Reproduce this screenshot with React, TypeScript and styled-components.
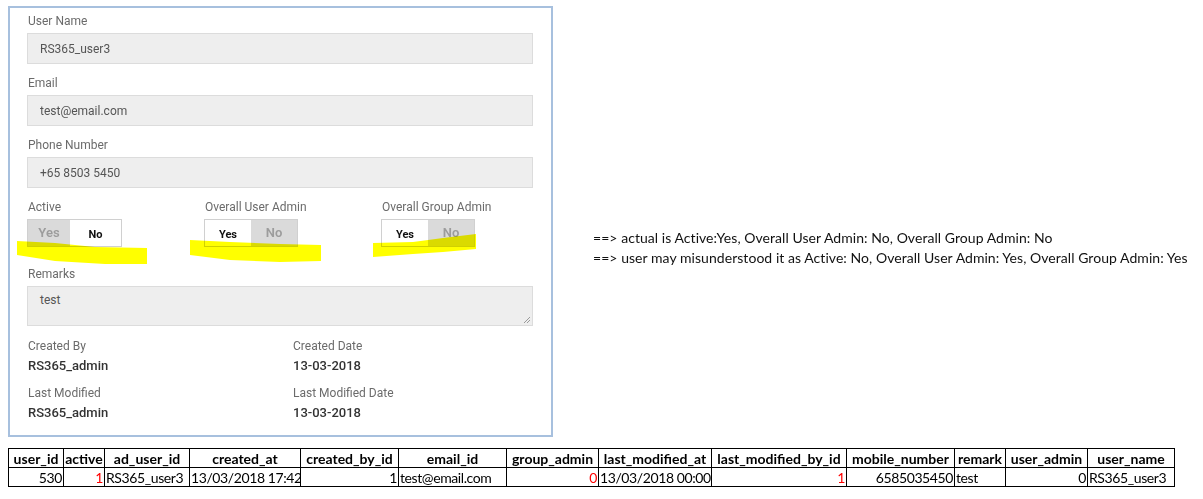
import React from "react";
import styled, { createGlobalStyle } from "styled-components";

const Global = createGlobalStyle`
  html, body { margin: 0; padding: 0; background: #ffffff; }
  body { width: 1203px; height: 499px; overflow: hidden; }
`;

const Page = styled.div`
  display: flex;
  flex-direction: column;
  padding: 6px 0 0 8px;
`;

const Top = styled.div`
  display: flex;
  align-items: flex-start;
`;

const Card = styled.div`
  box-sizing: border-box;
  width: 545px;
  height: 431px;
  border: 2px solid #a7c0de;
  padding: 6px 18px 0 17px;
  font-family: Roboto, "Noto Sans", sans-serif;
`;

const Field = styled.div<{ $mb?: number }>`
  display: flex;
  flex-direction: column;
  margin-bottom: ${(p) => (p.$mb ?? 12)}px;
`;

const Label = styled.div`
  font-size: 12px;
  line-height: 14px;
  color: #6b6b6b;
  margin-bottom: 5px;
  padding-left: 1px;
`;

const Input = styled.div`
  box-sizing: border-box;
  height: 31px;
  background: #eeeeee;
  border: 1px solid #dcdcdc;
  padding: 0 12px;
  display: flex;
  align-items: center;
  font-size: 12px;
  color: #555555;
`;

const TextArea = styled.div`
  position: relative;
  box-sizing: border-box;
  height: 40px;
  background: #eeeeee;
  border: 1px solid #dcdcdc;
  padding: 6px 12px;
  font-size: 12px;
  color: #555555;
`;

const Grip = styled.svg`
  position: absolute;
  right: 1px;
  bottom: 1px;
`;

const ToggleRow = styled.div`
  display: grid;
  grid-template-columns: 177px 177px 152px;
  margin-bottom: 20px;
`;

const ToggleCell = styled.div`
  position: relative;
  display: flex;
  flex-direction: column;
`;

const Toggle = styled.div`
  display: flex;
  box-sizing: border-box;
  height: 28px;
  border: 1px solid #d0d0d0;
  align-self: flex-start;
`;

const Seg = styled.div<{ $on: boolean; $w: number }>`
  width: ${(p) => p.$w}px;
  display: flex;
  align-items: center;
  justify-content: center;
  background: ${(p) => (p.$on ? "#ffffff" : "#dadada")};
  color: ${(p) => (p.$on ? "#111111" : "#9c9c9c")};
  font-size: ${(p) => (p.$on ? "11px" : "13px")};
  font-weight: ${(p) => (p.$on ? 700 : 600)};
  padding-top: ${(p) => (p.$on ? "2px" : "0")};
  padding-bottom: ${(p) => (p.$on ? "0" : "2px")};
`;

const Highlight = styled.svg`
  position: absolute;
  pointer-events: none;
  mix-blend-mode: multiply;
`;

const InfoGrid = styled.div`
  display: grid;
  grid-template-columns: 265px 200px;
  row-gap: 13px;
  padding-left: 1px;
  margin-top: 13px;
`;

const Info = styled.div`
  display: flex;
  flex-direction: column;
  gap: 6px;
`;

const InfoLabel = styled.div`
  font-size: 12px;
  line-height: 14px;
  color: #6b6b6b;
`;

const InfoValue = styled.div`
  font-size: 13px;
  line-height: 14px;
  font-weight: 500;
  color: #333333;
`;

const Notes = styled.div`
  margin: 222px 0 0 40px;
  font-family: Lato, "Liberation Sans", sans-serif;
  font-size: 14px;
  letter-spacing: 0.05px;
  line-height: 20px;
  color: #111111;
  white-space: nowrap;
`;

const Table = styled.table`
  border-collapse: collapse;
  margin-top: 11px;
  table-layout: fixed;
  width: 1166px;
  font-family: Lato, "Liberation Sans", sans-serif;
  font-size: 14px;
  color: #000;
`;

const Th = styled.th`
  border: 1px solid #000;
  font-weight: 700;
  text-align: center;
  padding: 0 1px;
  height: 18px;
  line-height: 17px;
  white-space: nowrap;
  overflow: hidden;
`;

const Td = styled.td<{ $align: string; $red?: boolean }>`
  border: 1px solid #000;
  text-align: ${(p) => p.$align};
  color: ${(p) => (p.$red ? "#ff0000" : "#000")};
  padding: 0 1px;
  height: 18px;
  line-height: 17px;
  letter-spacing: -0.4px;
  white-space: nowrap;
  overflow: hidden;
`;

type Col = { h: string; w: number; v: string; a: string; red?: boolean };

const cols: Col[] = [
  { h: "user_id", w: 55, v: "530", a: "right" },
  { h: "active", w: 41, v: "1", a: "right", red: true },
  { h: "ad_user_id", w: 85, v: "RS365_user3", a: "left" },
  { h: "created_at", w: 111, v: "13/03/2018 17:42", a: "right" },
  { h: "created_by_id", w: 98, v: "1", a: "right" },
  { h: "email_id", w: 108, v: "test@email.com", a: "left" },
  { h: "group_admin", w: 92, v: "0", a: "right", red: true },
  { h: "last_modified_at", w: 113, v: "13/03/2018 00:00", a: "right" },
  { h: "last_modified_by_id", w: 135, v: "1", a: "right", red: true },
  { h: "mobile_number", w: 108, v: "6585035450", a: "right" },
  { h: "remark", w: 51, v: "test", a: "left" },
  { h: "user_admin", w: 82, v: "0", a: "right" },
  { h: "user_name", w: 87, v: "RS365_user3", a: "left" },
];

function YesNo({ yes, wYes, wNo }: { yes: boolean; wYes: number; wNo: number }) {
  return (
    <Toggle>
      <Seg $on={yes} $w={wYes}>Yes</Seg>
      <Seg $on={!yes} $w={wNo}>No</Seg>
    </Toggle>
  );
}

export default function App() {
  return (
    <>
      <Global />
      <Page>
        <Top>
          <Card>
            <Field>
              <Label>User Name</Label>
              <Input>RS365_user3</Input>
            </Field>
            <Field>
              <Label>Email</Label>
              <Input>test@email.com</Input>
            </Field>
            <Field>
              <Label>Phone Number</Label>
              <Input>+65 8503 5450</Input>
            </Field>
            <ToggleRow>
              <ToggleCell>
                <Label>Active</Label>
                <YesNo yes={false} wYes={42} wNo={51} />
                <Highlight width="140" height="32" style={{ left: -12, top: 37 }} viewBox="0 0 140 32">
                  <path d="M2 4 L40 6 L80 10 L132 11 L132 27 L90 27 L40 24 L2 18 Z" fill="#ffff00" />
                </Highlight>
              </ToggleCell>
              <ToggleCell>
                <Label>Overall User Admin</Label>
                <YesNo yes={true} wYes={46} wNo={46} />
                <Highlight width="140" height="32" style={{ left: -14, top: 36 }} viewBox="0 0 140 32">
                  <path d="M0 4 L40 6 L90 8 L131 9 L131 25 L90 26 L40 24 L0 19 Z" fill="#ffff00" />
                </Highlight>
              </ToggleCell>
              <ToggleCell>
                <Label>Overall Group Admin</Label>
                <YesNo yes={true} wYes={46} wNo={46} />
                <Highlight width="110" height="32" style={{ left: -8, top: 32 }} viewBox="0 0 110 32">
                  <path d="M0 11 L40 10 L70 6 L103 2 L103 17 L70 20 L40 22 L0 25 Z" fill="#ffff00" />
                </Highlight>
              </ToggleCell>
            </ToggleRow>
            <Field $mb={0}>
              <Label>Remarks</Label>
              <TextArea>
                test
                <Grip width="8" height="8" viewBox="0 0 8 8">
                  <path d="M7 1 L1 7 M7 4 L4 7" stroke="#9a9a9a" strokeWidth="1" />
                </Grip>
              </TextArea>
            </Field>
            <InfoGrid>
              <Info>
                <InfoLabel>Created By</InfoLabel>
                <InfoValue>RS365_admin</InfoValue>
              </Info>
              <Info>
                <InfoLabel>Created Date</InfoLabel>
                <InfoValue>13-03-2018</InfoValue>
              </Info>
              <Info>
                <InfoLabel>Last Modified</InfoLabel>
                <InfoValue>RS365_admin</InfoValue>
              </Info>
              <Info>
                <InfoLabel>Last Modified Date</InfoLabel>
                <InfoValue>13-03-2018</InfoValue>
              </Info>
            </InfoGrid>
          </Card>
          <Notes>
            <div>==&gt; actual is Active:Yes, Overall User Admin: No, Overall Group Admin: No</div>
            <div>==&gt; user may misunderstood it as Active: No, Overall User Admin: Yes, Overall Group Admin: Yes</div>
          </Notes>
        </Top>
        <Table>
          <colgroup>
            {cols.map((c) => (
              <col key={c.h} style={{ width: c.w }} />
            ))}
          </colgroup>
          <thead>
            <tr>
              {cols.map((c) => (
                <Th key={c.h}>{c.h}</Th>
              ))}
            </tr>
          </thead>
          <tbody>
            <tr>
              {cols.map((c) => (
                <Td key={c.h} $align={c.a} $red={c.red}>
                  {c.v}
                </Td>
              ))}
            </tr>
          </tbody>
        </Table>
      </Page>
    </>
  );
}
